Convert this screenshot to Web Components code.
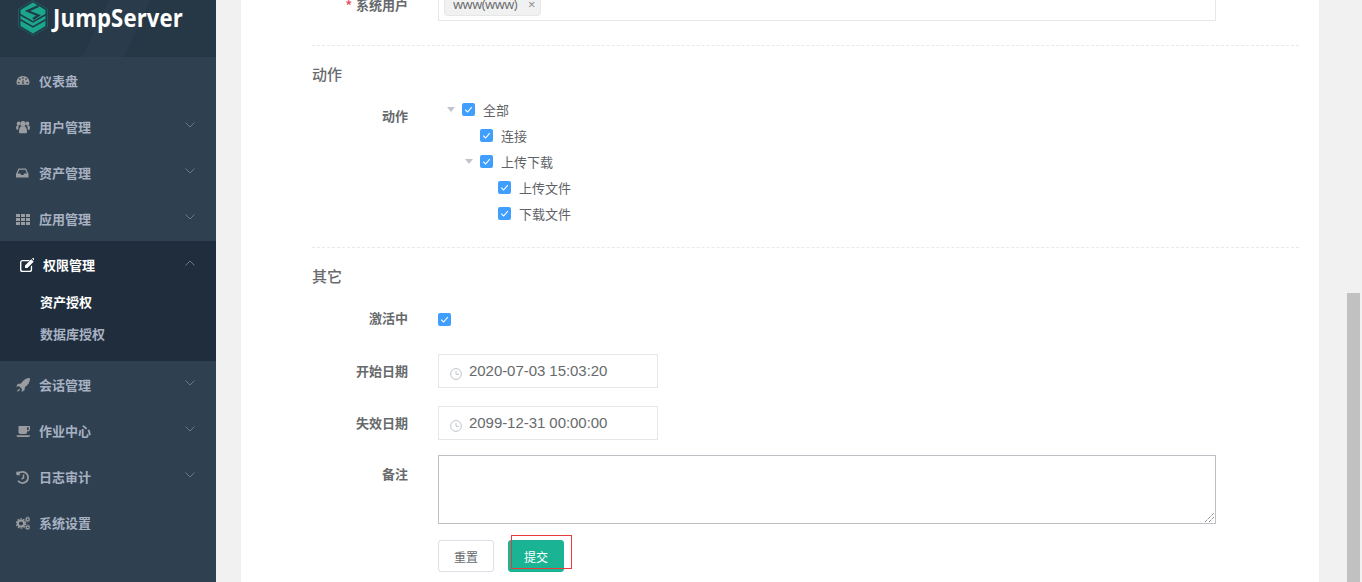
<!DOCTYPE html>
<html lang="zh"><head><meta charset="utf-8"><title>JumpServer</title>
<style>
html,body{margin:0;height:100%;overflow:hidden}
body{font-family:"Noto Sans CJK SC","Open Sans",sans-serif;font-size:13px;color:#676a6c}
</style></head><body>
<js-app></js-app>
<script>
const ICONS={
dashboard:'<path fill-rule="evenodd" d="M7 2C3 2 .5 5 .5 8.300c0 1 .2 1.700.6 2.400h11.800c.4-.7.6-1.400.6-2.400C13.500 5 11 2 7 2zM6.300 3.200h1.400v1.500H6.300zM2.800 5l1.100-.9 1 1.100-1 .9zM1.900 8h1.600v1.300H1.900zM10.500 8h1.600v1.300h-1.600zM9.100 5.200l1-1.100 1.100.9-1 1.100zM6.300 9.800 6.600 6h.8l.3 3.800a1 1 0 0 1-1.400 0z"/>',
users:'<circle cx="2.600" cy="3.400" r="1.900"/><circle cx="11.400" cy="3.400" r="1.900"/><circle cx="7" cy="3.800" r="2.700"/><path d="M0 8.300c0-1.800.6-3 1.800-3h1.300c-.4.800-.9 1.800-.9 4.400H.8zM14 8.300c0-1.800-.6-3-1.800-3h-1.300c.4.800.9 1.800.9 4.400h1.600zM3 12.300c0-3.800 1-6.100 2.200-6.100h3.600c1.200 0 2.200 2.300 2.200 6.100 0 .6-.4 1-1 1H4c-.6 0-1-.4-1-1z"/>',
inbox:'<path fill-rule="evenodd" d="M2.500 2.500h7.500L12.500 8v3.500H0V8zM3.200 3.700 1.600 7.600h2.700l.8 1.500h2.300l.8-1.500h2.700L9.300 3.700z"/>',
th:'<path d="M0 2h4v3H0zM5 2h4v3H5zM10 2h4v3h-4zM0 6h4v3H0zM5 6h4v3H5zM10 6h4v3h-4zM0 10h4v3H0zM5 10h4v3H5zM10 10h4v3h-4z"/>',
edit:'<path d="M2.500 2h7.500L8.700 3.300H2.600c-.7 0-1.200.5-1.200 1.200v7c0 .7.500 1.200 1.200 1.200h7c.7 0 1.200-.5 1.200-1.200V8.600L12.100 7.300v4.400c0 1.400-1.100 2.500-2.500 2.500h-7C1.100 14.200 0 13.100 0 11.700V4.500C0 3.100 1.100 2 2.500 2z"/><path d="M11.300 1.300 13.700 3.700 7.400 10H5V7.600zM12 .6l.7-.5c.3-.2.700-.2 1 .1l1 1c.3.3.3.700.1 1l-.5.7z"/>',
rocket:'<path d="M14 0C14 4 12.500 7 9 9l-.5 3.300L5.500 14l.5-3-2.800-2.700-3 .5L1.700 6 5 5.500C7 2 10 0 14 0z"/><path d="M3.500 10.700c-1 .2-2 1.200-2.500 3 1.800-.5 2.800-1.500 3-2.500z"/>',
coffee:'<path fill-rule="evenodd" d="M2.500 2h11c.5 0 .5 0 .5 .5V5c0 1.500-1 2.500-2.500 2.500H11v.8c0 .9-.8 1.700-1.700 1.700H4.200c-.9 0-1.700-.8-1.700-1.700zM11 3.200v3.100h.5c.8 0 1.200-.5 1.200-1.300V3.200z"/><path d="M.5 11.300H14c0 1-.5 1.700-1.300 1.700H1.800C1 13 .5 12.300.5 11.300z"/>',
history:'<path fill="none" stroke="currentColor" stroke-width="1.700" d="M2.500 3.500A5.600 5.600 0 1 1 2 10.800"/><path d="M.3 1.700 3.700 1.500v3.900L.3 5z" /><path fill="none" stroke="currentColor" stroke-width="1.500" d="M7.500 4.500v3.300l-2 1.300"/>',
cogs:'<circle cx="5" cy="7.500" r="3.100" fill="none" stroke="currentColor" stroke-width="2"/><circle cx="5" cy="7.500" r="4.600" fill="none" stroke="currentColor" stroke-width="1.400" stroke-dasharray="1.600 1.300"/><circle cx="11.700" cy="3.400" r="1.500" fill="none" stroke="currentColor" stroke-width="1.300"/><circle cx="11.700" cy="3.400" r="2.500" fill="none" stroke="currentColor" stroke-width=".8" stroke-dasharray="1 .9"/><circle cx="11.700" cy="11.300" r="1.500" fill="none" stroke="currentColor" stroke-width="1.300"/><circle cx="11.700" cy="11.300" r="2.500" fill="none" stroke="currentColor" stroke-width=".8" stroke-dasharray="1 .9"/>'
};
function def(name,css,html){
  customElements.define(name,class extends HTMLElement{
    connectedCallback(){
      if(this.shadowRoot)return;
      const r=this.attachShadow({mode:'open'});
      r.innerHTML='<style>'+css+'</style>'+(typeof html==='function'?html(this):html);
    }
  });
}
def('js-logo',`:host{display:flex;align-items:flex-start;height:57px;box-sizing:border-box;padding-left:18px;
  background:linear-gradient(115deg,#263745 0 45%,#2a3c4b 45% 62%,#263745 62%)}
  svg{display:block;flex:none}
  span{font:700 25px/1 "Open Sans",sans-serif;color:#fff;margin:5px 0 0 5px;letter-spacing:.15px;transform:scaleX(.885);transform-origin:left}`,
 `<svg width="30" height="36" viewBox="0 0 30 36"><path d="M15 .5 29.500 9v18L15 35.500.5 27V9z" fill="#1f3b49" stroke="#1f5a60"/>
 <path d="M15 2.500 27.500 10v16L15 33.500 2.500 26V10z" fill="#1ca78a"/>
 <path d="M2 19.500 15 27l13-7.500M2 14.500 15 22l13-7.500" fill="none" stroke="#1f3b49" stroke-width="1.500"/>
 <path d="M20.500 6 9.500 11 20.500 15.500 15 19" fill="none" stroke="#1f3b49" stroke-width="2.200"/></svg><span>JumpServer</span>`);
def('nav-item',`:host{display:block;height:46px;box-sizing:border-box;padding-top:14px;color:#a7b1c2;font-weight:700;font-size:13px;line-height:20px}
  .r{display:flex;align-items:center;padding-left:16px;height:20px;position:relative}
  svg.i{width:14px;height:14px;fill:currentColor;color:#9a9c9f;margin-right:9px;flex:none}
  svg.c{position:absolute;left:184px;top:4px;width:12px;height:8px;fill:none;stroke:#6b7785;stroke-width:1}
  :host([active]){color:#fff}
  :host([active]) .r{padding-left:20px}
  :host([active]) svg.i{color:#fff}`,
 el=>`<div class="r"><svg class="i" viewBox="0 0 14 14">${ICONS[el.getAttribute('icon')]}</svg><span><slot></slot></span>${el.hasAttribute('arrow')?`<svg class="c" viewBox="0 0 12 8"><path d="${el.hasAttribute('active')?'M1.500 6.500 6 2l4.500 4.500':'M1.500 1.500 6 6l4.500-4.500'}"/></svg>`:''}</div>`);
def('nav-sub',`:host{display:block;height:32px;line-height:32px;padding-left:40px;color:#a7b1c2;font-weight:700;font-size:13px}
  :host([on]){color:#fff}`,`<slot></slot>`);
def('nav-group',`:host{display:block;height:120px;background:#1f2d3c;overflow:hidden}
  ::slotted(nav-sub:first-of-type){margin-top:-1px}`,`<slot></slot>`);
def('js-sidebar',`:host{display:block;width:216px;flex:none;background:#2f4050;height:100%;overflow:hidden}`,`<slot></slot>`);
def('form-card',`:host{display:block;margin-left:25px;width:1078px;flex:none;box-sizing:border-box;background:#fff;padding:0 20px 0 71px;height:100%;overflow:hidden;box-shadow:0 0 0 .5px #eeeeef}`,`<slot></slot>`);
def('form-row',`:host{display:grid;grid-template-columns:96px 778px;column-gap:30px}
  label{font-weight:700;font-size:13px;color:#676a6c;text-align:right;line-height:20px;padding-top:var(--lt,0px);white-space:nowrap}
  b{color:#ed5565;font-weight:700;margin-right:4px}`,
 el=>`<label>${el.hasAttribute('req')?'<b>*</b>':''}${el.getAttribute('label')}</label><div><slot></slot></div>`);
def('form-divider',`:host{display:block;height:0;border-top:1px dashed #e7eaec}`,``);
def('form-heading',`:host{display:block;font-size:15px;font-weight:500;line-height:20px;color:#676a6c}`,`<slot></slot>`);
def('tag-select',`:host{display:block;height:34px;box-sizing:border-box;border:1px solid #e5e6e7;padding:0 5px}
  .t{display:inline-flex;align-items:center;box-sizing:border-box;width:97px;height:24px;margin-top:4px;background:#f1f1f1;border:1px solid #e5e6e7;border-radius:4px;padding-left:8px;color:#676a6c;font:13px/20px "Open Sans",sans-serif;letter-spacing:-.5px}
  i{font-style:normal;color:#888;margin-left:auto;margin-right:5px;font-size:13px}`,
 `<span class="t">www(www)<i>×</i></span>`);
def('check-box',`:host{display:inline-block;width:13px;height:13px;background:#409eff;border-radius:2px;flex:none}
  svg{display:block}`,`<svg width="13" height="13" viewBox="0 0 13 13"><path d="M3.200 6.700 5.600 9l4.200-4.800" fill="none" stroke="#fff" stroke-width="1.100"/></svg>`);
def('tree-node',`:host{display:flex;align-items:center;height:26px;font-size:13px;color:#606266;padding-left:calc(var(--level,0) * 18px)}
  .a{width:24px;flex:none;display:block}
  svg{display:block;margin:1px 0 0 9px}
  check-box{margin-top:1px}
  span{margin-left:8px}`,
 el=>`<div class="a">${el.hasAttribute('open')?'<svg width="8" height="6" viewBox="0 0 8 6"><path d="M0 0h8L4 5z" fill="#c0c4cc"/></svg>':''}</div><check-box></check-box><span><slot></slot></span>`);
def('date-input',`:host{display:flex;align-items:center;width:220px;height:34px;box-sizing:border-box;border:1px solid #e5e6e7;color:#676a6c;font:15px "Liberation Sans",sans-serif;letter-spacing:-.05px}
  svg{margin:5px 7px 0 11px;flex:none}
  span{padding-bottom:2px}`,
 `<svg width="12" height="12" viewBox="0 0 12 12"><circle cx="6" cy="6" r="5.400" fill="none" stroke="#c0c4cc"/><path d="M6 3v3.300h3" fill="none" stroke="#c0c4cc"/></svg><span><slot></slot></span>`);
def('note-area',`:host{display:block;position:relative;height:69px;box-sizing:border-box;border:1px solid #bfc0c6}
  svg{position:absolute;right:1px;bottom:1px}`,
 `<svg width="9" height="9" viewBox="0 0 9 9"><path d="M0 9 9 0M4 9 9 4" stroke="#555" stroke-dasharray="1 1" fill="none"/></svg>`);
def('js-button',`:host{display:inline-flex;align-items:center;justify-content:center;width:56px;height:32px;box-sizing:border-box;border:1px solid #dcdfe6;border-radius:3px;font-size:12px;color:#676a6c;background:#fff}
  :host([primary]){background:#1ab394;border-color:#1ab394;color:#fff}`,`<slot></slot>`);
def('scroll-bar',`:host{display:block;position:absolute;right:2px;top:0;bottom:0;width:13px}
  div{position:absolute;left:0;right:0;top:293px;bottom:0;background:#c1c1c1}`,`<div></div>`);
def('mark-box',`:host{display:block;position:absolute;left:3px;top:-5px;width:61px;height:34px;box-sizing:border-box;border:1px solid #e83a3a;pointer-events:none}`,``);
def('js-app',`:host{display:flex;width:1362px;height:582px;background:#f1f1f2;position:relative;overflow:hidden}`,
`<js-sidebar>
 <js-logo></js-logo>
 <nav-item icon="dashboard">仪表盘</nav-item>
 <nav-item icon="users" arrow>用户管理</nav-item>
 <nav-item icon="inbox" arrow>资产管理</nav-item>
 <nav-item icon="th" arrow>应用管理</nav-item>
 <nav-group>
  <nav-item icon="edit" arrow active>权限管理</nav-item>
  <nav-sub on>资产授权</nav-sub>
  <nav-sub>数据库授权</nav-sub>
 </nav-group>
 <nav-item icon="rocket" arrow>会话管理</nav-item>
 <nav-item icon="coffee" arrow>作业中心</nav-item>
 <nav-item icon="history" arrow>日志审计</nav-item>
 <nav-item icon="cogs">系统设置</nav-item>
</js-sidebar>
<form-card>
 <form-row req label="系统用户" style="margin-top:-13px;--lt:8px"><tag-select></tag-select></form-row>
 <form-divider style="margin-top:24px"></form-divider>
 <form-heading style="margin-top:18px">动作</form-heading>
 <form-row label="动作" style="margin-top:12px;--lt:10px"><div><tree-node open>全部</tree-node><tree-node style="--level:1">连接</tree-node><tree-node open style="--level:1">上传下载</tree-node><tree-node style="--level:2">上传文件</tree-node><tree-node style="--level:2">下载文件</tree-node></div></form-row>
 <form-divider style="margin-top:21px"></form-divider>
 <form-heading style="margin-top:18px">其它</form-heading>
 <form-row label="激活中" style="margin-top:22px;height:21px"><check-box style="display:block;margin-top:5px"></check-box></form-row>
 <form-row label="开始日期" style="margin-top:25px;--lt:7px"><date-input>2020-07-03 15:03:20</date-input></form-row>
 <form-row label="失效日期" style="margin-top:18px;--lt:7px"><date-input>2099-12-31 00:00:00</date-input></form-row>
 <form-row label="备注" style="margin-top:15px;--lt:9px"><note-area></note-area></form-row>
 <form-row label="" style="margin-top:16px"><div style="display:flex;gap:14px"><js-button>重置</js-button><span style="position:relative;display:block;height:32px"><js-button primary>提交</js-button><mark-box></mark-box></span></div></form-row>
</form-card>
<scroll-bar></scroll-bar>`);
</script></body></html>
